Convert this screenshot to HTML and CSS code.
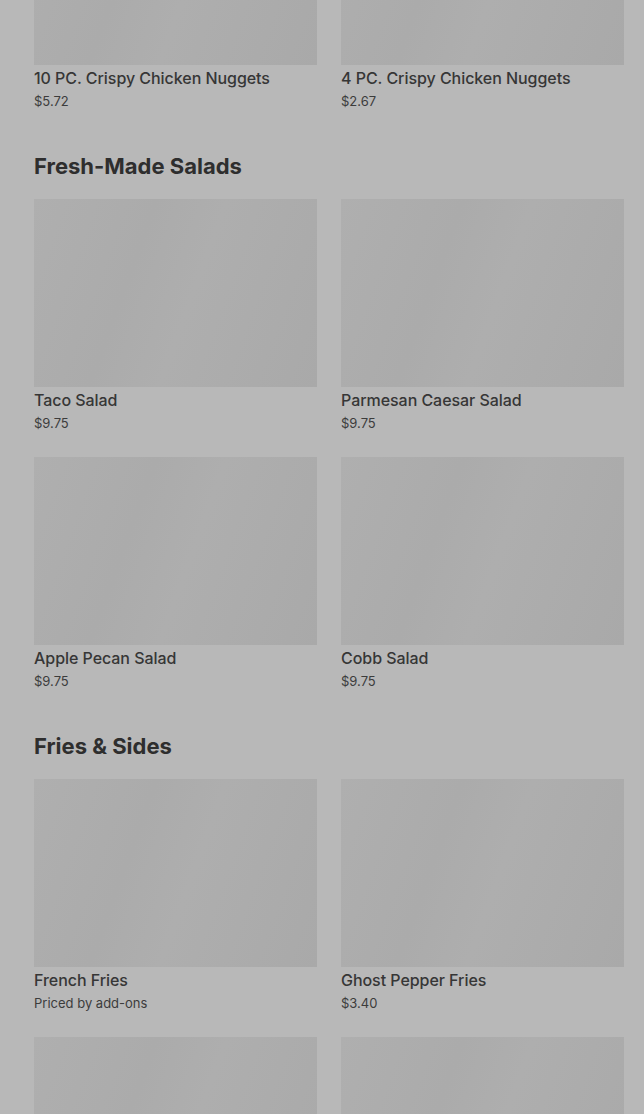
FILE: index.html
```html
<!DOCTYPE html>
<html>
    <head>
        <meta name="viewport" content="width=device-width, initial-scale=1" />
        <link rel="stylesheet" href="styles.css">
    </head>
    <body class="maincontainer">
        <main class="menu">

            <section class="category">
                <div class="items">
                    <div class="item">
                        <div class="thumb"></div>
                        <div class="name">10 PC. Crispy Chicken Nuggets</div>
                        <div class="price">$5.72</div>
                    </div>
                    <div class="item">
                        <div class="thumb"></div>
                        <div class="name">4 PC. Crispy Chicken Nuggets</div>
                        <div class="price">$2.67</div>
                    </div>
                </div>
            </section>

            <section class="category">
                <h2>Fresh-Made Salads</h2>
                <div class="items">
                    <div class="item">
                        <div class="thumb"></div>
                        <div class="name">Taco Salad</div>
                        <div class="price">$9.75</div>
                    </div>
                    <div class="item">
                        <div class="thumb"></div>
                        <div class="name">Parmesan Caesar Salad</div>
                        <div class="price">$9.75</div>
                    </div>
                    <div class="item">
                        <div class="thumb"></div>
                        <div class="name">Apple Pecan Salad</div>
                        <div class="price">$9.75</div>
                    </div>
                    <div class="item">
                        <div class="thumb"></div>
                        <div class="name">Cobb Salad</div>
                        <div class="price">$9.75</div>
                    </div>
                </div>
            </section>

            <section class="category">
                <h2>Fries &amp; Sides</h2>
                <div class="items">
                    <div class="item">
                        <div class="thumb"></div>
                        <div class="name">French Fries</div>
                        <div class="price">Priced by add-ons</div>
                    </div>
                    <div class="item">
                        <div class="thumb"></div>
                        <div class="name">Ghost Pepper Fries</div>
                        <div class="price">$3.40</div>
                    </div>
                    <div class="item">
                        <div class="thumb"></div>
                    </div>
                    <div class="item">
                        <div class="thumb"></div>
                    </div>
                </div>
            </section>

        </main>
    </body>
</html>
```

FILE: styles.css
```css
* {
    padding: 0;
    margin: 0;
    box-sizing: border-box;
}

:root {
    --color-bg: #b8b8b8;
    --color-text: #363636;
}

body.maincontainer {
    background: var(--color-bg);
    color: var(--color-text);
    font-family: Inter, "Liberation Sans", sans-serif;
    overflow: hidden;
    height: 100vh;
}

/* page is scrolled part way down the menu */
main.menu {
    margin-top: -123px;
    padding: 0 20px 0 34px;
}

section.category h2 {
    font-size: 22px;
    line-height: 32px;
    font-weight: 700;
    color: #2e2e2e;
    margin-top: 15px;
    margin-bottom: 17px;
}

div.items {
    display: grid;
    grid-template-columns: 1fr 1fr;
    column-gap: 24px;
}

div.item {
    padding-bottom: 23px;
}

div.thumb {
    height: 188px;
    background: linear-gradient(110deg, #afafaf 0%, #ababab 35%, #aeaeae 55%, #a9a9a9 100%);
}

div.name {
    margin-top: 1px;
    font-size: 16px;
    line-height: 24px;
    font-weight: 500;
    letter-spacing: -0.05px;
}

div.price {
    font-size: 13px;
    line-height: 22px;
    color: #3c3c3c;
}
```
